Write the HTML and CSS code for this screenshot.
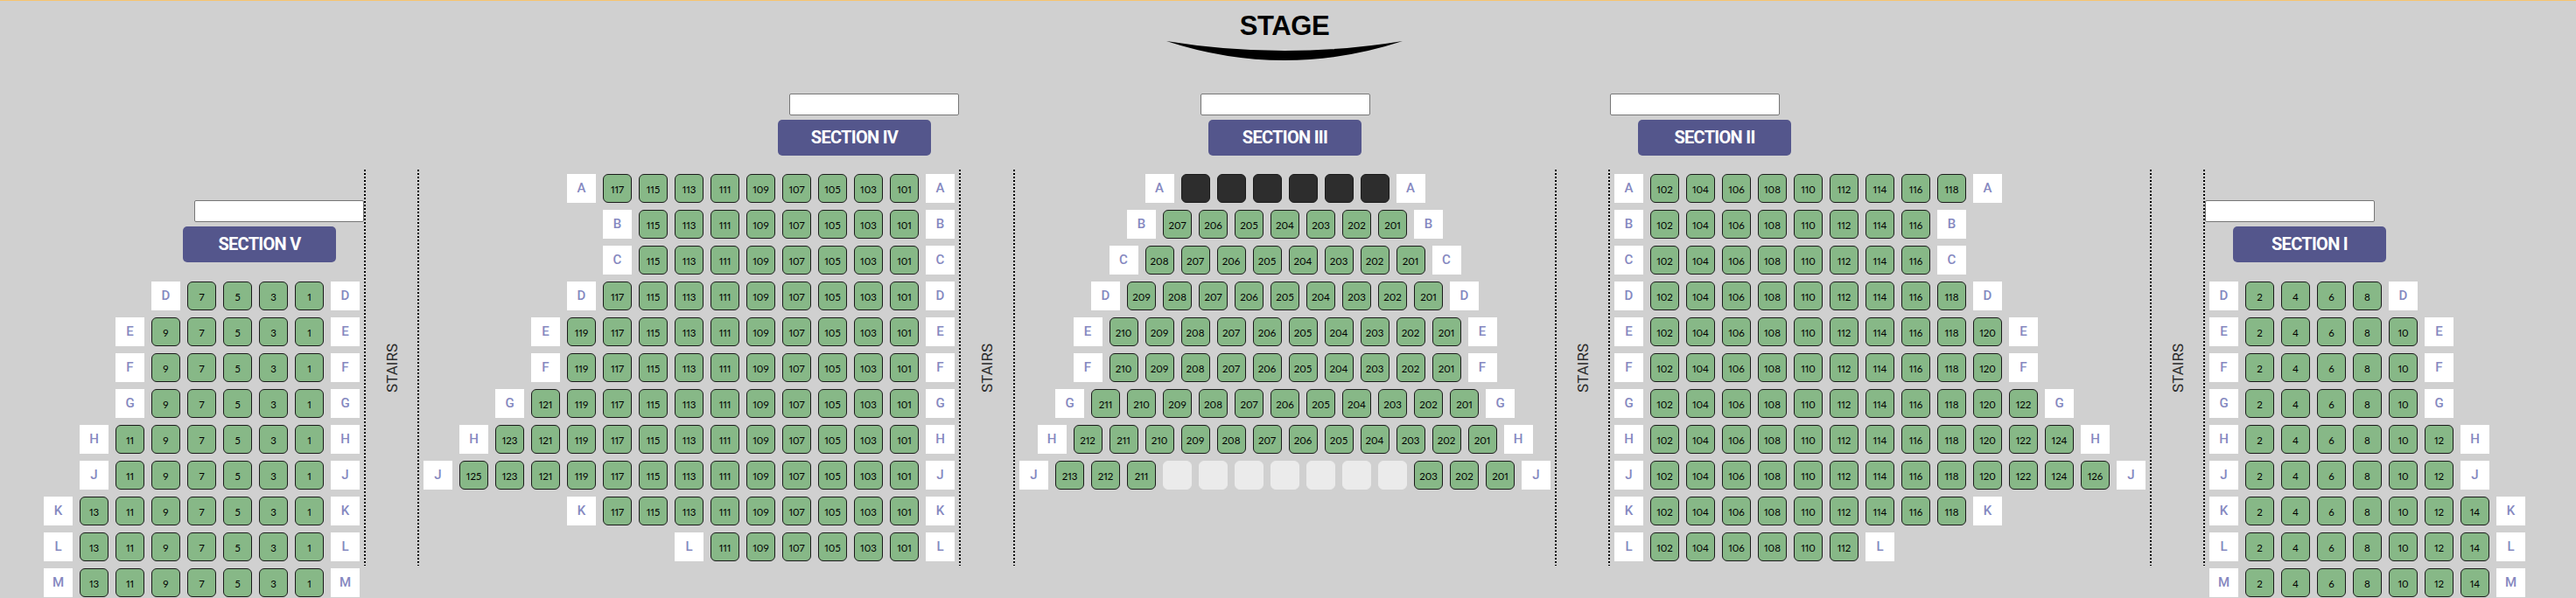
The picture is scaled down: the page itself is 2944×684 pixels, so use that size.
FILE: index.html
```html
<!DOCTYPE html>
<html lang="en">
<head>
    <meta charset="UTF-8">
    <meta name="viewport" content="width=device-width, initial-scale=1.0">
    <title>Seat Map</title>
    <link rel="stylesheet" href="styles.css">
</head>
<body>
    <header class="stage">
        <h1>STAGE</h1>
        <svg class="stage-arc" viewBox="0 0 270 23" width="270" height="23">
            <path d="M0 0 Q135 22 270 0 Q135 44 0 0 Z"></path>
        </svg>
    </header>
    <div class="hall" id="hall"></div>

    <script src="script.js"></script>
</body>
</html>
```

FILE: styles.css
```css
body {
    font-family: Roboto, Arial, sans-serif;
    margin: 0;
    padding: 0;
    height: 684px;
    overflow: hidden;
    background-color: #d0d0d0;
    border-top: 1px solid #f6c46e;
    box-sizing: border-box;
}

/* Stage */
.stage {
    display: flex;
    flex-direction: column;
    align-items: center;
    height: 106px;
    padding-right: 8px;
}

.stage h1 {
    margin: 11px 0 0;
    font-family: "Liberation Sans", Arial, sans-serif;
    font-size: 31px;
    letter-spacing: -0.4px;
    line-height: 35px;
    font-weight: bold;
    color: #000;
}

.stage-arc {
    display: block;
}

.stage-arc path {
    fill: #000;
}

/* Hall */
.hall {
    display: flex;
    align-items: flex-start;
}

/* square dots on both sides, the 2px dotted border comes out round */
.aisle {
    display: flex;
    flex-shrink: 0;
    align-items: center;
    justify-content: center;
    width: 63px;
    height: 453px;
    margin-top: 87px;
    background-image:
        repeating-linear-gradient(#000 0 2px, transparent 2px 4px),
        repeating-linear-gradient(#000 0 2px, transparent 2px 4px);
    background-size: 2px 100%;
    background-position: left top, right top;
    background-repeat: no-repeat;
}

.aisle-wide {
    width: 64px;
}

.aisle span {
    writing-mode: vertical-rl;
    transform: rotate(180deg);
    font-size: 17px;
    color: #2b2b2b;
}

/* Sections */
.section {
    display: flex;
    flex-direction: column;
    flex-shrink: 0;
    box-sizing: border-box;
    width: 617px;
}

.section-left {
    align-items: flex-end;
}

.section-center {
    align-items: center;
}

.section-right {
    align-items: flex-start;
}

.section-low {
    padding-top: 122px;
}

.section-low .section-title {
    margin-bottom: 22px;
}

.section-first {
    width: 416px;
}

.section-last {
    width: 424px;
}

.section-input {
    box-sizing: border-box;
    width: 194px;
    height: 25px;
    margin: 0 0 5px;
    padding: 1px 2px;
    background-color: #fff;
    border: 1px solid #767676;
    border-radius: 2px;
}

.section-title {
    box-sizing: border-box;
    width: 175px;
    height: 41px;
    margin-bottom: 21px;
    background-color: #54568c;
    border-radius: 5px;
    color: #fff;
    font-size: 20px;
    font-weight: 700;
    letter-spacing: -0.7px;
    line-height: 41px;
    text-align: center;
}

.section-left .section-title {
    margin-right: 32px;
}

.section-right .section-title {
    margin-left: 32px;
}

.rows {
    display: flex;
    flex-direction: column;
    gap: 8px;
    padding: 0 5px;
}

.section-left .rows {
    align-items: flex-end;
}

.section-center .rows {
    align-items: center;
}

.section-right .rows {
    align-items: flex-start;
}

.row {
    display: flex;
    gap: 8px;
}

/* Row letters and seats */
.label,
.seat {
    box-sizing: border-box;
    width: 33px;
    height: 33px;
    text-align: center;
}

.label {
    background-color: #fff;
    color: #8588c0;
    font-size: 15px;
    font-weight: 500;
    line-height: 32px;
}

.seat {
    background-color: #87b887;
    border: 1px solid #1a1a1a;
    border-radius: 6px;
    color: #000;
    font-family: Lato, Arial, sans-serif;
    font-size: 11.5px;
    font-variant-numeric: proportional-nums;
    line-height: 33px;
}

.seat-taken {
    background-color: #2d2d2d;
}

.seat-blank {
    background-color: #ebebeb;
    border-color: #ebebeb;
}
```

FILE: script.js
```js
// rows are [letter, highest seat number]
const sections = [
    {
        title: 'SECTION V', side: 'left', low: true, first: 1, step: 2,
        rows: [['D', 7], ['E', 9], ['F', 9], ['G', 9], ['H', 11], ['J', 11], ['K', 13], ['L', 13], ['M', 13]]
    },
    {
        title: 'SECTION IV', side: 'left', first: 101, step: 2,
        rows: [['A', 117], ['B', 115], ['C', 115], ['D', 117], ['E', 119], ['F', 119], ['G', 121], ['H', 123], ['J', 125], ['K', 117], ['L', 111]]
    },
    {
        title: 'SECTION III', side: 'center', first: 201, step: 1,
        rows: [['A', 206], ['B', 207], ['C', 208], ['D', 209], ['E', 210], ['F', 210], ['G', 211], ['H', 212], ['J', 213]]
    },
    {
        title: 'SECTION II', side: 'right', first: 102, step: 2,
        rows: [['A', 118], ['B', 116], ['C', 116], ['D', 118], ['E', 120], ['F', 120], ['G', 122], ['H', 124], ['J', 126], ['K', 118], ['L', 112]]
    },
    {
        title: 'SECTION I', side: 'right', low: true, first: 2, step: 2,
        rows: [['D', 8], ['E', 10], ['F', 10], ['G', 10], ['H', 12], ['J', 12], ['K', 14], ['L', 14], ['M', 14]]
    }
];

function seatHTML(section, letter, number) {
    if (section.side === 'center' && letter === 'A') {
        return '<div class="seat seat-taken"></div>';
    }
    if (section.side === 'center' && letter === 'J' && number > 203 && number < 211) {
        return '<div class="seat seat-blank"></div>';
    }
    return `<div class="seat">${number}</div>`;
}

function rowHTML(section, [letter, top]) {
    const numbers = [];
    for (let n = section.first; n <= top; n += section.step) {
        numbers.push(n);
    }
    // the left half of the hall counts down towards the middle
    if (section.side !== 'right') {
        numbers.reverse();
    }
    return `
        <div class="row">
            <div class="label">${letter}</div>
            ${numbers.map(n => seatHTML(section, letter, n)).join('')}
            <div class="label">${letter}</div>
        </div>
    `;
}

function renderHall() {
    const hall = document.getElementById('hall');
    hall.innerHTML = sections.map((section, index) => {
        const classes = ['section', `section-${section.side}`];
        if (section.low) classes.push('section-low');
        if (index === 0) classes.push('section-first');
        if (index === sections.length - 1) classes.push('section-last');

        const aisleClass = index === 1 ? 'aisle aisle-wide' : 'aisle';
        const aisle = index < sections.length - 1
            ? `<div class="${aisleClass}"><span>STAIRS</span></div>`
            : '';

        return `
            <div class="${classes.join(' ')}">
                <input type="text" class="section-input">
                <div class="section-title">${section.title}</div>
                <div class="rows">
                    ${section.rows.map(row => rowHTML(section, row)).join('')}
                </div>
            </div>
            ${aisle}
        `;
    }).join('');
}

renderHall();
```
